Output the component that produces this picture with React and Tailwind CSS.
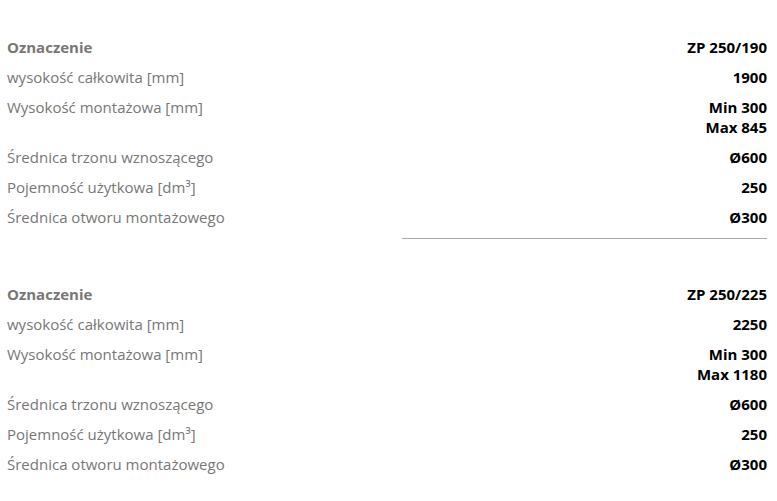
const TABLES = [
  {
    name: 'ZP 250/190',
    rows: [
      ['wysokość całkowita [mm]', ['1900']],
      ['Wysokość montażowa [mm]', ['Min 300', 'Max 845']],
      ['Średnica trzonu wznoszącego', ['Ø600']],
      ['Pojemność użytkowa [dm³]', ['250']],
      ['Średnica otworu montażowego', ['Ø300']],
    ],
  },
  {
    name: 'ZP 250/225',
    rows: [
      ['wysokość całkowita [mm]', ['2250']],
      ['Wysokość montażowa [mm]', ['Min 300', 'Max 1180']],
      ['Średnica trzonu wznoszącego', ['Ø600']],
      ['Pojemność użytkowa [dm³]', ['250']],
      ['Średnica otworu montażowego', ['Ø300']],
    ],
  },
]

function Row({ label, values, head }) {
  return (
    <div className="flex justify-between py-[5px] leading-5">
      <div className={head ? 'font-bold text-[#777]' : 'text-[#777]'}>{label}</div>
      <div className="text-right font-bold text-black">
        {values.map((v) => (
          <div key={v}>{v}</div>
        ))}
      </div>
    </div>
  )
}

export default function App() {
  return (
    <div
      className="min-h-[501px] bg-white pl-[7px] pr-[10px] pt-[32px] text-[15px]"
      style={{ fontFamily: '"Open Sans", sans-serif' }}
    >
      {TABLES.map((t, i) => (
        <div key={t.name} className={i > 0 ? 'mt-[40px]' : ''}>
          <Row label="Oznaczenie" values={[t.name]} head />
          {t.rows.map(([label, values]) => (
            <Row key={label} label={label} values={values} />
          ))}
          {i === 0 && <div className="ml-auto mt-[6px] h-px w-[365px] bg-[#aaa]" />}
        </div>
      ))}
    </div>
  )
}
